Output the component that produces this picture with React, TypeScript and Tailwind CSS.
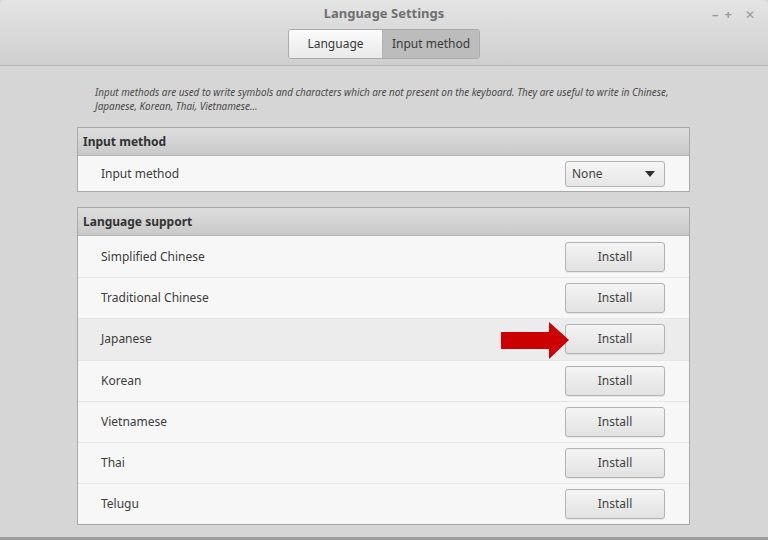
const languages = [
  'Simplified Chinese',
  'Traditional Chinese',
  'Japanese',
  'Korean',
  'Vietnamese',
  'Thai',
  'Telugu',
];

const font = { fontFamily: '"Noto Sans", "DejaVu Sans", sans-serif' };

const GrayButton = ({ children }: { children: React.ReactNode }) => (
  <button className="w-[100px] h-[30px] rounded-[3px] border border-[#b3b3b3] bg-gradient-to-b from-[#f4f4f4] to-[#e2e2e2] text-[12px] text-[#444] shadow-[0_1px_0_rgba(0,0,0,0.06)]">
    {children}
  </button>
);

const App = () => {
  return (
    <div className="w-[768px] h-[540px] bg-[#d6d6d6] flex flex-col overflow-hidden border-b-[3px] border-[#9c9c9c]" style={font}>
      {/* title bar + tabs */}
      <div className="h-[66px] shrink-0 rounded-t-[5px] bg-gradient-to-b from-[#e4e4e4] to-[#cfcfcf] border-b border-[#b8b8b8] flex flex-col">
        <div className="grid grid-cols-[1fr_auto_1fr] items-center h-[29px]">
          <div />
          <div className="text-[13px] font-bold text-[#707070] pb-[1px]">Language Settings</div>
          <div className="flex justify-end items-center pr-[13px] text-[#9a9a9a] text-[13px] font-bold">
            <span className="mr-[6px]">–</span>
            <span className="mr-[13px]">+</span>
            <span className="text-[12px]">✕</span>
          </div>
        </div>
        <div className="flex justify-center">
          <div className="flex h-[30px] rounded-[3px] border border-[#ababab] overflow-hidden text-[12px] text-[#3a3a3a]">
            <div className="w-[94px] flex items-center justify-center bg-gradient-to-b from-[#fbfbfb] to-[#e9e9e9] border-r border-[#b0b0b0]">
              Language
            </div>
            <div className="w-[96px] flex items-center justify-center bg-[#bcbcbc]">Input method</div>
          </div>
        </div>
      </div>

      <div className="flex flex-col pl-[77px] pr-[78px]">
        <p className="pl-[18px] pr-[8px] pt-[19px] text-[9.9px] leading-[14px] italic text-[#4a4a4a]">
          Input methods are used to write symbols and characters which are not present on the keyboard. They are useful to write in Chinese, Japanese, Korean, Thai, Vietnamese...
        </p>

        <div className="mt-[14px] border border-[#a9a9a9] bg-[#f7f7f7]">
          <div className="h-[28px] flex items-center pl-[5px] bg-gradient-to-b from-[#dedede] to-[#c9c9c9] border-b border-[#b4b4b4] text-[12px] font-bold text-[#333]">
            Input method
          </div>
          <div className="h-[35px] flex items-center justify-between pl-[23px] pr-[24px] text-[12px] text-[#3c3c3c]">
            <span>Input method</span>
            <div className="w-[100px] h-[26px] rounded-[3px] border border-[#b3b3b3] bg-gradient-to-b from-[#f6f6f6] to-[#e6e6e6] flex items-center justify-between pl-[6px] pr-[9px] text-[#444]">
              <span>None</span>
              <svg width="10" height="6" viewBox="0 0 10 6">
                <path d="M0 0 L10 0 L5 6 Z" fill="#2e2e2e" />
              </svg>
            </div>
          </div>
        </div>

        <div className="mt-[15px] border border-[#a9a9a9] bg-[#f7f7f7]">
          <div className="h-[28px] flex items-center pl-[5px] bg-gradient-to-b from-[#dedede] to-[#c9c9c9] border-b border-[#b4b4b4] text-[12px] font-bold text-[#333]">
            Language support
          </div>
          {languages.map((lang, i) => (
            <div
              key={lang}
              className={
                'relative h-[41.2px] flex items-center justify-between pl-[23px] pr-[24px] text-[12px] text-[#3c3c3c] ' +
                (i > 0 ? 'border-t border-[#e7e7e7] ' : '') +
                (lang === 'Japanese' ? 'bg-[#ececec]' : '')
              }
            >
              <span>{lang}</span>
              {lang === 'Japanese' && (
                <svg className="absolute left-[423px] top-[3px]" width="68" height="37" viewBox="0 0 68 37">
                  <path d="M0 10 L48 10 L48 0 L68 18 L48 37 L48 27 L0 27 Z" fill="#cc0000" />
                </svg>
              )}
              <GrayButton>Install</GrayButton>
            </div>
          ))}
        </div>
      </div>
    </div>
  );
};

export default App;
